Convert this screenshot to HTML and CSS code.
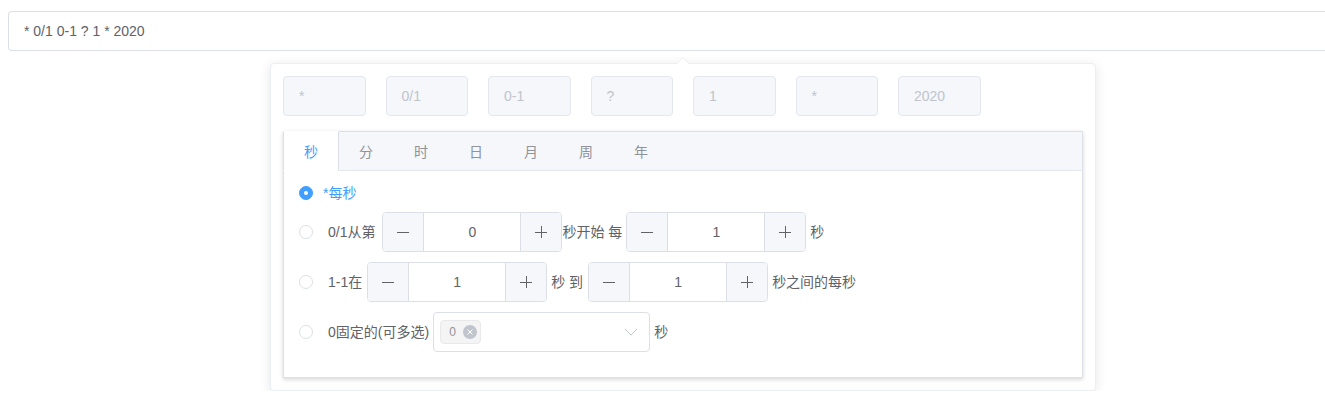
FILE: index.html
```html
<!DOCTYPE html>
<html lang="zh-CN">
<head>
<meta charset="utf-8">
<title>cron</title>
<link rel="stylesheet" href="styles.css">
</head>
<body>
<div class="wrap">
  <div class="cron-input">* 0/1 0-1 ? 1 * 2020</div>
  <div class="popover">
    <div class="fields">
      <div class="field">*</div>
      <div class="field">0/1</div>
      <div class="field">0-1</div>
      <div class="field">?</div>
      <div class="field">1</div>
      <div class="field">*</div>
      <div class="field">2020</div>
    </div>
    <div class="tabs">
      <div class="tabs-header">
        <div class="tab active">秒</div>
        <div class="tab">分</div>
        <div class="tab">时</div>
        <div class="tab">日</div>
        <div class="tab">月</div>
        <div class="tab">周</div>
        <div class="tab">年</div>
      </div>
      <div class="tabs-content">
        <div class="row row-first">
          <span class="radio checked"></span>
          <span class="label label-active">*每秒</span>
        </div>
        <div class="row">
          <span class="radio"></span>
          <span class="label lead trail-wide">0/1从第</span>
          <div class="num">
            <span class="btn btn-minus"><svg width="12" height="12" viewBox="0 0 12 12"><path d="M0 6.5h12" stroke="#606266" stroke-width="1"/></svg></span>
            <span class="num-val">0</span>
            <span class="btn btn-plus"><svg width="12" height="12" viewBox="0 0 12 12"><path d="M0 6.5h12M6.5 0v12" stroke="#606266" stroke-width="1"/></svg></span>
          </div>
          <span class="label">秒开始 每</span>
          <div class="num num-gap">
            <span class="btn btn-minus"><svg width="12" height="12" viewBox="0 0 12 12"><path d="M0 6.5h12" stroke="#606266" stroke-width="1"/></svg></span>
            <span class="num-val">1</span>
            <span class="btn btn-plus"><svg width="12" height="12" viewBox="0 0 12 12"><path d="M0 6.5h12M6.5 0v12" stroke="#606266" stroke-width="1"/></svg></span>
          </div>
          <span class="label lead">秒</span>
        </div>
        <div class="row">
          <span class="radio"></span>
          <span class="label lead trail">1-1在</span>
          <div class="num">
            <span class="btn btn-minus"><svg width="12" height="12" viewBox="0 0 12 12"><path d="M0 6.5h12" stroke="#606266" stroke-width="1"/></svg></span>
            <span class="num-val">1</span>
            <span class="btn btn-plus"><svg width="12" height="12" viewBox="0 0 12 12"><path d="M0 6.5h12M6.5 0v12" stroke="#606266" stroke-width="1"/></svg></span>
          </div>
          <span class="label lead">秒 到</span>
          <div class="num num-gap-wide">
            <span class="btn btn-minus"><svg width="12" height="12" viewBox="0 0 12 12"><path d="M0 6.5h12" stroke="#606266" stroke-width="1"/></svg></span>
            <span class="num-val">1</span>
            <span class="btn btn-plus"><svg width="12" height="12" viewBox="0 0 12 12"><path d="M0 6.5h12M6.5 0v12" stroke="#606266" stroke-width="1"/></svg></span>
          </div>
          <span class="label lead">秒之间的每秒</span>
        </div>
        <div class="row">
          <span class="radio"></span>
          <span class="label lead trail-narrow">0固定的(可多选)</span>
          <div class="select">
            <span class="tag">0<span class="tag-close"><svg width="8" height="8" viewBox="0 0 8 8"><path d="M1.5 1.5l5 5M6.5 1.5l-5 5" stroke="#fff" stroke-width="1"/></svg></span></span>
            <svg class="chevron" width="14" height="8" viewBox="0 0 14 8"><path d="M1 1l6 6 6-6" fill="none" stroke="#c0c4cc" stroke-width="1"/></svg>
          </div>
          <span class="label lead">秒</span>
        </div>
      </div>
    </div>
  </div>
</div>
</body>
</html>
```
FILE: styles.css
```css
html {
  overflow: hidden;
  background: #fff;
}
body {
  margin: 8px 0 8px 8px;
  font-family: "Liberation Sans", "Noto Sans CJK SC", sans-serif;
  font-size: 14px;
  color: #606266;
}
.wrap {
  padding-top: 3px;
}
.cron-input {
  box-sizing: border-box;
  height: 40px;
  border: 1px solid #dcdfe6;
  border-right: none;
  border-radius: 4px 0 0 4px;
  padding: 0 15px;
  line-height: 38px;
  color: #606266;
}
.popover {
  position: relative;
  box-sizing: border-box;
  width: 826px;
  margin-top: 12px;
  margin-left: 262px;
  padding: 12px;
  background: #fff;
  border: 1px solid #ebeef5;
  border-radius: 4px;
  box-shadow: 0 2px 12px 0 rgba(0, 0, 0, 0.1);
}
.popover::before {
  content: "";
  position: absolute;
  top: -7px;
  left: 406px;
  border-style: solid;
  border-width: 0 6px 6px 6px;
  border-color: transparent transparent #ebeef5 transparent;
}
.popover::after {
  content: "";
  position: absolute;
  top: -6px;
  left: 406px;
  border-style: solid;
  border-width: 0 6px 6px 6px;
  border-color: transparent transparent #fff transparent;
}
.fields {
  display: flex;
  gap: 20px;
}
.field {
  box-sizing: border-box;
  width: 82.5px;
  height: 40px;
  background: #f5f7fa;
  border: 1px solid #e4e7ed;
  border-radius: 4px;
  padding: 0 15px;
  line-height: 38px;
  color: #c0c4cc;
}
.tabs {
  margin-top: 15px;
  border: 1px solid #dcdfe6;
  background: #fff;
  box-shadow: 0 2px 4px 0 rgba(0, 0, 0, 0.12), 0 0 6px 0 rgba(0, 0, 0, 0.04);
}
.tabs-header {
  display: flex;
  height: 38px;
  background: #f5f7fa;
  border-bottom: 1px solid #e4e7ed;
}
.tab {
  box-sizing: border-box;
  height: 40px;
  line-height: 40px;
  margin-top: -1px;
  margin-left: -1px;
  padding: 0 20px;
  border: 1px solid transparent;
  color: #909399;
}
.tab.active {
  background: #fff;
  color: #409eff;
  border-left-color: #dcdfe6;
  border-right-color: #dcdfe6;
  border-bottom-color: #fff;
}
.tabs-content {
  padding: 15px;
}
.row {
  display: flex;
  align-items: center;
  height: 40px;
  margin-bottom: 10px;
  white-space: pre;
}
.row-first {
  height: 14px;
  margin-bottom: 12px;
}
.radio {
  box-sizing: border-box;
  width: 14px;
  height: 14px;
  border-radius: 50%;
  border: 1px solid #dcdfe6;
  background: #fff;
  flex: none;
}
.radio.checked {
  border-color: #409eff;
  background: #409eff;
  display: flex;
  align-items: center;
  justify-content: center;
}
.radio.checked::after {
  content: "";
  width: 4px;
  height: 4px;
  border-radius: 50%;
  background: #fff;
}
.label {
  margin-left: 0;
  line-height: 1;
}
.radio + .label {
  margin-left: 10px;
}
.radio + .label.lead {
  margin-left: 15px;
}
.label-active {
  color: #409eff;
}
.lead {
  margin-left: 4px;
}
.trail {
  margin-right: 5px;
}
.trail-narrow {
  margin-right: 4px;
}
.trail-wide {
  margin-right: 7px;
}
.num {
  box-sizing: border-box;
  display: flex;
  width: 180px;
  height: 40px;
  border: 1px solid #dcdfe6;
  border-radius: 4px;
  overflow: hidden;
  flex: none;
}
.num-gap {
  margin-left: 4px;
}
.num-gap-wide {
  margin-left: 5px;
}
.btn {
  width: 40px;
  height: 38px;
  background: #f5f7fa;
  display: flex;
  align-items: center;
  justify-content: center;
}
.btn-minus {
  border-right: 1px solid #dcdfe6;
}
.btn-plus {
  border-left: 1px solid #dcdfe6;
}
.num-val {
  flex: 1;
  text-align: center;
  line-height: 38px;
  color: #606266;
}
.select {
  box-sizing: border-box;
  position: relative;
  width: 217px;
  height: 40px;
  border: 1px solid #dcdfe6;
  border-radius: 4px;
  display: flex;
  align-items: center;
  padding-left: 6px;
  flex: none;
}
.tag {
  box-sizing: border-box;
  height: 24px;
  padding: 0 3px 0 8px;
  display: flex;
  align-items: center;
  gap: 7px;
  background: #f4f4f5;
  border: 1px solid #e9e9eb;
  border-radius: 4px;
  font-size: 12px;
  color: #909399;
}
.tag-close {
  width: 14px;
  height: 14px;
  border-radius: 50%;
  background: #c0c4cc;
  display: flex;
  align-items: center;
  justify-content: center;
}
.chevron {
  margin-left: auto;
  margin-right: 11px;
}
```
